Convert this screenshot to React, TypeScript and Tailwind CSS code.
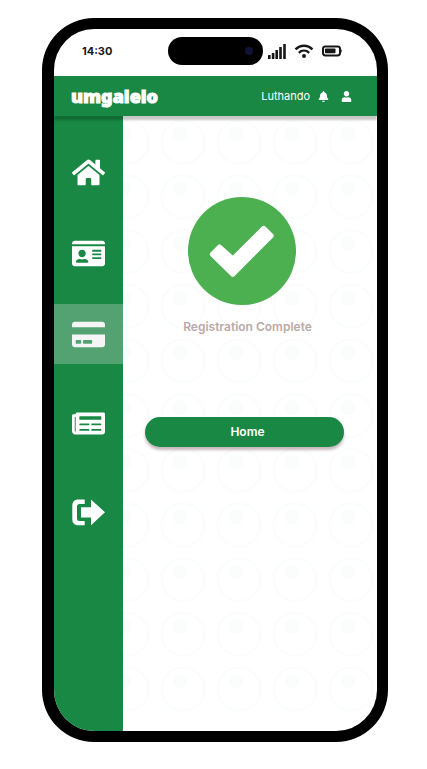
import { FaBell, FaCreditCard, FaHome, FaIdCard, FaNewspaper, FaUser } from "react-icons/fa";

function SignalIcon() {
  return (
    <svg viewBox="0 0 18 16" className="h-4 w-[18px]" fill="#171717" aria-label="Signal">
      <rect x="0" y="12" width="2.6" height="4" rx="0.5" />
      <rect x="3.8" y="10" width="2.6" height="6" rx="0.5" />
      <rect x="7.4" y="7" width="2.6" height="9" rx="0.5" />
      <rect x="11.2" y="4" width="2.6" height="12" rx="0.5" />
      <rect x="15.2" y="1" width="2.6" height="15" rx="0.5" />
    </svg>
  );
}

function WifiIcon() {
  return (
    <svg viewBox="0 0 20 16" className="h-4 w-5" fill="none" stroke="#171717" aria-label="Wi-Fi">
      <path d="M1.5 6.4C6.4 1.5 13.6 1.5 18.5 6.4" strokeWidth="2.3" />
      <path d="M4.8 9.8C7.9 6.9 12.1 6.9 15.2 9.8" strokeWidth="2.3" />
      <circle cx="10" cy="13" r="2" fill="#171717" stroke="none" />
    </svg>
  );
}

function BatteryIcon() {
  return (
    <svg viewBox="0 0 20 12" className="h-3 w-5" fill="none" aria-label="Battery">
      <rect x="1" y="1.4" width="17" height="9" rx="2.4" stroke="#171717" strokeWidth="2" />
      <rect x="3" y="3.5" width="10.5" height="4.8" rx="0.8" fill="#171717" />
      <path d="M18.8 4c1.2 .3 1.2 3.5 0 3.8z" fill="#171717" />
    </svg>
  );
}

function ExitIcon() {
  return (
    <svg viewBox="0 0 33 28" className="h-7 w-[33px]" fill="white" aria-hidden="true">
      <path d="M5 1.500H12.700V6H7.500Q5 6 5 8.500V20.500Q5 23 7.500 23H12.700V27.200H5Q.3 26 .3 21.500V7.500Q.3 2.500 5 1.500z" />
      <path d="M9 9.300h10V1.500L33 14.300 19 27.200V19.500H9z" />
    </svg>
  );
}

function CircleBackdrop() {
  return (
    <svg className="absolute inset-x-0 top-0 h-[600px] w-full" aria-hidden="true">
      <defs>
        <pattern id="rings" x="-24" y="-1" width="56" height="54.7" patternUnits="userSpaceOnUse">
          <circle cx="28" cy="27" r="21.5" fill="none" stroke="#fafdfc" strokeWidth="2.2" />
          <circle cx="25" cy="19" r="7.5" fill="#fafdfc" />
        </pattern>
      </defs>
      <rect width="100%" height="100%" fill="url(#rings)" />
    </svg>
  );
}

function CheckBadge() {
  return (
    <svg viewBox="0 0 108 108" className="size-[108px]" role="img" aria-label="Success">
      <circle cx="54" cy="54" r="54" fill="#4caf50" />
      <path
        d="M22.500 55.500 30 48q1.500-1.500 3 0L44.800 58.600 74 29.500q1.700-1.700 3.400 0L85 37q1.700 1.700 0 3.400L46.400 79.200q-1.600 1.600-3.200 0L22.500 59q-1.700-1.700 0-3.500z"
        fill="white"
      />
    </svg>
  );
}

const navItem = "flex h-[60px] w-full shrink-0 items-center justify-center text-white";

export default function App() {
  return (
    <div className="flex min-h-screen bg-white pt-[18px] pr-[39px] pb-[27px] pl-[42px] font-['Inter',sans-serif]">
      <div className="flex w-full flex-col overflow-hidden rounded-[52px] border-[11px] border-l-[12px] border-black bg-white">
        <div className="flex h-[47px] shrink-0 items-center pr-[35px] pb-[3px] pl-7">
          <time className="w-[86px] text-[11px] font-bold text-[#171717]">14:30</time>
          <div className="flex h-7 w-[95px] items-center justify-end rounded-full bg-black pr-2.5">
            <span className="size-2 rounded-full bg-[#11123a]" />
          </div>
          <div className="ml-auto flex items-center gap-2">
            <SignalIcon />
            <WifiIcon />
            <BatteryIcon />
          </div>
        </div>

        <header className="relative z-10 flex h-10 shrink-0 items-center bg-[#188844] pr-[25px] pl-[17px] text-white shadow-[0_4px_2px_rgba(0,0,0,0.22)]">
          <h1 className="font-['Noto_Sans',sans-serif] text-[18px] leading-6 font-black [-webkit-text-stroke:1px_white]">umgalelo</h1>
          <div className="ml-auto flex items-center">
            <span className="text-[11px]">Luthando</span>
            <button type="button" aria-label="Notifications" className="ml-2">
              <FaBell className="h-[11px] w-[11px]" />
            </button>
            <button type="button" aria-label="Profile" className="ml-3">
              <FaUser className="h-[11px] w-[11px]" />
            </button>
          </div>
        </header>

        <div className="flex flex-1">
          <nav className="flex w-[69px] shrink-0 flex-col bg-[#188844] pt-[26px]">
            <div className="flex flex-col gap-[21px]">
              <button type="button" aria-label="Home" className={navItem}>
                <FaHome className="size-[33px]" />
              </button>
              <button type="button" aria-label="Identity" className={navItem}>
                <FaIdCard className="size-[33px]" />
              </button>
              <button type="button" aria-label="Cards" aria-current="page" className="flex h-[60px] w-full shrink-0 items-center justify-center bg-[#54a272] text-[#f5f5f5]">
                <FaCreditCard className="size-[33px]" />
              </button>
            </div>
            <div className="mt-[29px] flex flex-col gap-[29px]">
              <button type="button" aria-label="News" className={navItem}>
                <FaNewspaper className="size-[33px]" />
              </button>
              <button type="button" aria-label="Sign out" className={navItem}>
                <ExitIcon />
              </button>
            </div>
          </nav>

          <main className="relative flex-1">
            <CircleBackdrop />
            <div className="relative flex flex-col items-center pt-[81px] pr-[33px] pl-[22px]">
              <div className="flex w-full justify-center pr-1.5">
                <CheckBadge />
              </div>
              <p className="mt-3 pl-1.5 text-[12px] leading-5 font-semibold text-[#bba9a9]">Registration Complete</p>
              <button
                type="button"
                className="mt-20 h-[30px] w-full rounded-full bg-[#188844] pl-1.5 text-[12px] font-semibold text-white shadow-[0_3px_3px_rgba(60,20,30,0.3)]"
              >
                Home
              </button>
            </div>
          </main>
        </div>
      </div>
    </div>
  );
}
